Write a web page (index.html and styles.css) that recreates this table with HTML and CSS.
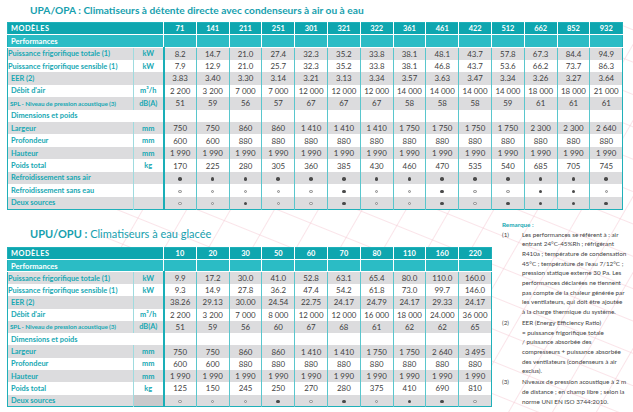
FILE: index.html
```html
<!DOCTYPE html>
<html lang="fr">
<head>
<meta charset="utf-8">
<link rel="stylesheet" href="styles.css">
</head>
<body>
<div class="page">
  <svg class="deco" viewBox="0 0 633 412" aria-hidden="true">
    <defs>
      <pattern id="pa" width="38" height="38" patternUnits="userSpaceOnUse" patternTransform="rotate(30)">
        <path d="M0 0V38" stroke="#f5c3cf" stroke-width="0.9" fill="none"/>
      </pattern>
      <pattern id="pb" width="30" height="30" patternUnits="userSpaceOnUse" patternTransform="rotate(22)">
        <path d="M0 0H30" stroke="#f5c3cf" stroke-width="0.9" fill="none"/>
      </pattern>
      <clipPath id="cz">
        <path d="M100 200H633V412H489V262H100Z M621 24H633V200H621Z"/>
      </clipPath>
    </defs>
    <g clip-path="url(#cz)">
      <rect width="633" height="412" fill="url(#pa)"/>
      <rect width="633" height="412" fill="url(#pb)"/>
    </g>
  </svg>

  <section class="block1">
    <h1 class="title t1"><span class="pre">UPA/OPA :</span> Climatiseurs à détente directe avec condenseurs à air ou à eau</h1>
    <table class="spec wide">
      <colgroup><col class="c-lb"><col class="c-u"><col span="14" class="c-m"></colgroup>
      <tr class="hd"><th colspan="2" class="hl">MODÈLES</th><th>71</th><th>141</th><th>211</th><th>251</th><th>301</th><th>321</th><th>322</th><th>361</th><th>461</th><th>422</th><th>512</th><th>662</th><th>852</th><th>932</th></tr>
      <tr class="sec"><th colspan="2" class="hl">Performances</th><td></td><td></td><td></td><td></td><td></td><td></td><td></td><td></td><td></td><td></td><td></td><td></td><td></td><td></td></tr>
      <tr class="g"><th class="lb fl">Puissance frigorifique totale (1)</th><td class="u">kW</td><td>8.2</td><td>14.7</td><td>21.0</td><td>27.4</td><td>32.3</td><td>35.2</td><td>33.8</td><td>38.1</td><td>48.1</td><td>43.7</td><td>57.8</td><td>67.3</td><td>84.4</td><td>94.9</td></tr>
      <tr><th class="lb fl">Puissance frigorifique sensible (1)</th><td class="u">kW</td><td>7.9</td><td>12.9</td><td>21.0</td><td>25.7</td><td>32.3</td><td>35.2</td><td>33.8</td><td>38.1</td><td>46.8</td><td>43.7</td><td>53.6</td><td>66.2</td><td>73.7</td><td>86.3</td></tr>
      <tr class="g"><th class="lb">EER (2)</th><td class="u"></td><td>3.83</td><td>3.40</td><td>3.30</td><td>3.14</td><td>3.21</td><td>3.13</td><td>3.34</td><td>3.57</td><td>3.63</td><td>3.47</td><td>3.34</td><td>3.26</td><td>3.27</td><td>3.64</td></tr>
      <tr><th class="lb">Débit d'air</th><td class="u">m³/h</td><td>2&nbsp;200</td><td>3&nbsp;200</td><td>7&nbsp;000</td><td>7&nbsp;000</td><td>12&nbsp;000</td><td>12&nbsp;000</td><td>12&nbsp;000</td><td>14&nbsp;000</td><td>14&nbsp;000</td><td>14&nbsp;000</td><td>14&nbsp;000</td><td>18&nbsp;000</td><td>18&nbsp;000</td><td>21&nbsp;000</td></tr>
      <tr class="g"><th class="lb spl">SPL - Niveau de pression acoustique (3)</th><td class="u">dB(A)</td><td>51</td><td>59</td><td>56</td><td>57</td><td>67</td><td>67</td><td>67</td><td>58</td><td>58</td><td>58</td><td>59</td><td>61</td><td>61</td><td>61</td></tr>
      <tr class="dim"><th colspan="2" class="lb">Dimensions et poids</th><td></td><td></td><td></td><td></td><td></td><td></td><td></td><td></td><td></td><td></td><td></td><td></td><td></td><td></td></tr>
      <tr class="g"><th class="lb">Largeur</th><td class="u">mm</td><td>750</td><td>750</td><td>860</td><td>860</td><td>1&nbsp;410</td><td>1&nbsp;410</td><td>1&nbsp;410</td><td>1&nbsp;750</td><td>1&nbsp;750</td><td>1&nbsp;750</td><td>1&nbsp;750</td><td>2&nbsp;300</td><td>2&nbsp;300</td><td>2&nbsp;640</td></tr>
      <tr><th class="lb">Profondeur</th><td class="u">mm</td><td>600</td><td>600</td><td>880</td><td>880</td><td>880</td><td>880</td><td>880</td><td>880</td><td>880</td><td>880</td><td>880</td><td>880</td><td>880</td><td>880</td></tr>
      <tr class="g"><th class="lb">Hauteur</th><td class="u">mm</td><td>1&nbsp;990</td><td>1&nbsp;990</td><td>1&nbsp;990</td><td>1&nbsp;990</td><td>1&nbsp;990</td><td>1&nbsp;990</td><td>1&nbsp;990</td><td>1&nbsp;990</td><td>1&nbsp;990</td><td>1&nbsp;990</td><td>1&nbsp;990</td><td>1&nbsp;990</td><td>1&nbsp;990</td><td>1&nbsp;990</td></tr>
      <tr><th class="lb">Poids total</th><td class="u">kg</td><td>170</td><td>225</td><td>280</td><td>305</td><td>360</td><td>385</td><td>430</td><td>460</td><td>470</td><td>535</td><td>540</td><td>685</td><td>705</td><td>745</td></tr>
      <tr class="g"><th class="lb">Refroidissement sans air</th><td class="u"></td><td><i class="on"></i></td><td><i class="on"></i></td><td><i class="on"></i></td><td><i class="on"></i></td><td><i class="on"></i></td><td><i class="on"></i></td><td><i class="on"></i></td><td><i class="on"></i></td><td><i class="on"></i></td><td><i class="on"></i></td><td><i class="on"></i></td><td><i class="on"></i></td><td><i class="on"></i></td><td><i class="on"></i></td></tr>
      <tr><th class="lb">Refroidissement sans eau</th><td class="u"></td><td><i class="off"></i></td><td><i class="off"></i></td><td><i class="off"></i></td><td><i class="off"></i></td><td><i class="off"></i></td><td><i class="on"></i></td><td><i class="off"></i></td><td><i class="off"></i></td><td><i class="on"></i></td><td><i class="off"></i></td><td><i class="off"></i></td><td><i class="on"></i></td><td><i class="on"></i></td><td><i class="off"></i></td></tr>
      <tr class="g"><th class="lb">Deux sources</th><td class="u"></td><td><i class="off"></i></td><td><i class="off"></i></td><td><i class="on"></i></td><td><i class="off"></i></td><td><i class="off"></i></td><td><i class="on"></i></td><td><i class="off"></i></td><td><i class="off"></i></td><td><i class="on"></i></td><td><i class="off"></i></td><td><i class="on"></i></td><td><i class="on"></i></td><td><i class="on"></i></td><td><i class="on"></i></td></tr>
    </table>
  </section>

  <section class="block2">
    <div class="left">
      <h1 class="title t2"><span class="pre">UPU/OPU :</span> Climatiseurs à eau glacée</h1>
      <table class="spec narrow">
        <colgroup><col class="c-lb"><col class="c-u"><col span="10" class="c-m"></colgroup>
        <tr class="hd"><th colspan="2" class="hl">MODÈLES</th><th>10</th><th>20</th><th>30</th><th>50</th><th>60</th><th>70</th><th>80</th><th>110</th><th>160</th><th>220</th></tr>
        <tr class="sec"><th colspan="2" class="hl">Performances</th><td></td><td></td><td></td><td></td><td></td><td></td><td></td><td></td><td></td><td></td></tr>
        <tr class="g"><th class="lb fl">Puissance frigorifique totale (1)</th><td class="u">kW</td><td>9.9</td><td>17.2</td><td>30.0</td><td>41.0</td><td>52.8</td><td>63.1</td><td>65.4</td><td>80.0</td><td>110.0</td><td>160.0</td></tr>
        <tr><th class="lb fl">Puissance frigorifique sensible (1)</th><td class="u">kW</td><td>9.3</td><td>14.9</td><td>27.8</td><td>36.2</td><td>47.4</td><td>54.2</td><td>61.8</td><td>73.0</td><td>99.7</td><td>146.0</td></tr>
        <tr class="g"><th class="lb">EER (2)</th><td class="u"></td><td>38.26</td><td>29.13</td><td>30.00</td><td>24.54</td><td>22.75</td><td>24.17</td><td>24.79</td><td>24.17</td><td>29.33</td><td>24.17</td></tr>
        <tr><th class="lb">Débit d'air</th><td class="u">m³/h</td><td>2&nbsp;200</td><td>3&nbsp;200</td><td>7&nbsp;000</td><td>8&nbsp;000</td><td>12&nbsp;000</td><td>12&nbsp;000</td><td>16&nbsp;000</td><td>18&nbsp;000</td><td>24.000</td><td>36&nbsp;000</td></tr>
        <tr class="g"><th class="lb spl">SPL - Niveau de pression acoustique (3)</th><td class="u">dB(A)</td><td>51</td><td>59</td><td>56</td><td>60</td><td>67</td><td>68</td><td>61</td><td>62</td><td>62</td><td>65</td></tr>
        <tr class="dim"><th colspan="2" class="lb">Dimensions et poids</th><td></td><td></td><td></td><td></td><td></td><td></td><td></td><td></td><td></td><td></td></tr>
        <tr class="g"><th class="lb">Largeur</th><td class="u">mm</td><td>750</td><td>750</td><td>860</td><td>860</td><td>1&nbsp;410</td><td>1&nbsp;410</td><td>1&nbsp;750</td><td>1&nbsp;750</td><td>2&nbsp;640</td><td>3&nbsp;495</td></tr>
        <tr><th class="lb">Profondeur</th><td class="u">mm</td><td>600</td><td>600</td><td>880</td><td>880</td><td>880</td><td>880</td><td>880</td><td>880</td><td>880</td><td>880</td></tr>
        <tr class="g"><th class="lb">Hauteur</th><td class="u">mm</td><td>1&nbsp;990</td><td>1&nbsp;990</td><td>1&nbsp;990</td><td>1&nbsp;990</td><td>1&nbsp;990</td><td>1&nbsp;990</td><td>1&nbsp;990</td><td>1&nbsp;990</td><td>1&nbsp;990</td><td>1&nbsp;990</td></tr>
        <tr><th class="lb">Poids total</th><td class="u">kg</td><td>125</td><td>150</td><td>245</td><td>250</td><td>270</td><td>280</td><td>375</td><td>410</td><td>690</td><td>810</td></tr>
        <tr class="g"><th class="lb">Deux sources</th><td class="u dk"></td><td><i class="off"></i></td><td><i class="off"></i></td><td><i class="off"></i></td><td><i class="on"></i></td><td><i class="off"></i></td><td><i class="on"></i></td><td><i class="off"></i></td><td><i class="on"></i></td><td><i class="on"></i></td><td><i class="off"></i></td></tr>
      </table>
    </div>

    <aside class="notes">
      <p class="rm">Remarque :</p>
      <div class="note"><span class="n">(1)</span><p>Les performances se réfèrent à : air<br>entrant 24°C-45%Rh ; réfrigérant<br>R410a ; température de condensation<br>45°C ; température de l'eau 7/12°C ;<br>pression statique externe 30 Pa. Les<br>performances déclarées ne tiennent<br>pas compte de la chaleur générée par<br>les ventilateurs, qui doit être ajoutée<br>à la charge thermique du système.</p></div>
      <div class="note"><span class="n">(2)</span><p>EER (Energy Efficiency Ratio)<br>= puissance frigorifique totale<br>/ puissance absorbée des<br>compresseurs + puissance absorbée<br>des ventilateurs (condenseurs à air<br>exclus).</p></div>
      <div class="note"><span class="n">(3)</span><p>Niveaux de pression acoustique à 2 m<br>de distance ; en champ libre ; selon la<br>norme UNI EN ISO 3744:2010.</p></div>
    </aside>
  </section>
</div>
</body>
</html>
```

FILE: styles.css
```css
* { box-sizing: border-box; }

body {
  margin: 0;
  background: #fff;
  font-family: Lato, "Open Sans", "Liberation Sans", sans-serif;
}

.page {
  position: relative;
  width: 633px;
  height: 412px;
  overflow: hidden;
}

.deco {
  position: absolute;
  left: 0;
  top: 0;
  width: 633px;
  height: 412px;
  z-index: 0;
}

section {
  position: relative;
  z-index: 1;
}

.block1 {
  padding: 3px 0 0 7px;
}

.title {
  margin: 0 0 0 23px;
  color: #16a0ae;
  white-space: nowrap;
}

.title .pre {
  font-weight: 700;
}

.t1 {
  font-size: 10.2px;
  line-height: 14px;
  font-weight: 700;
  margin-bottom: 5px;
}

.t2 {
  font-size: 11px;
  line-height: 15px;
  font-weight: 400;
  margin-bottom: 6px;
}

/* ---------- tables ---------- */
.spec {
  border-collapse: collapse;
  table-layout: fixed;
  border: 1.5px solid #1fb0b9;
}

.wide { width: 615px; }
.narrow { width: 484px; }

.c-lb { width: 126px; }
.c-u { width: 30px; }
.c-m { width: 32.8px; }

.wide tr { height: 12.45px; }
.narrow tr { height: 12.3px; }

.spec th,
.spec td {
  padding: 0;
  white-space: nowrap;
  overflow: hidden;
}

.spec td {
  text-align: center;
  font-size: 7.9px;
  color: #3f3f3f;
  border-left: 1.5px solid #5ac6cd;
  background: #fff;
}

.spec .u {
  color: #17a8b3;
  font-weight: 700;
  font-size: 7.4px;
  border-left: 1px solid #9fdbdf;
}

.spec .u + td,
.spec th[colspan] + td {
  border-left: 2px solid #1aaeb7;
}

.spec .g td,
.spec .g th {
  background: #dcdcde;
}

.spec .g .dk {
  background: #c9c9cb;
}

/* header rows */
.spec .hd th {
  background: #0ea6af;
  color: #fff;
  font-weight: 700;
  font-size: 7.4px;
  text-align: center;
  border-left: 1px solid #fff;
  border-bottom: 1px solid #fff;
}

.spec .hd th.hl {
  text-align: left;
  padding-left: 3px;
  letter-spacing: 0.5px;
  border-left: none;
}

.spec .sec th,
.spec .sec td {
  background: #2bbcc5;
  border-bottom: 1px solid #fff;
}

.spec .sec td,
.spec .sec th[colspan] + td {
  border-left: 1px solid #fff;
}

.spec .sec th.hl {
  text-align: left;
  color: #fff;
  font-weight: 700;
  font-size: 7.6px;
  padding-left: 3px;
}

/* row labels */
.spec .lb {
  text-align: left;
  color: #17a8b3;
  font-weight: 700;
  font-size: 7.4px;
  padding-left: 3px;
}

.spec .lb.fl {
  padding-left: 0;
}

.spec .lb.spl {
  font-size: 6.3px;
  padding-left: 2px;
  letter-spacing: -0.1px;
}

/* dots */
.on,
.off {
  display: inline-block;
  vertical-align: middle;
  border-radius: 50%;
}

.on {
  width: 3.6px;
  height: 3.6px;
  background: #4a4a4a;
}

.off {
  width: 3.4px;
  height: 3.4px;
  border: 0.9px solid #8a8a8a;
  background: #e8e8e8;
}

/* ---------- second block ---------- */
.block2 {
  display: flex;
  align-items: flex-start;
  margin-top: 6px;
  padding-left: 7px;
}

.block2 .left {
  padding-top: 10px;
}

.notes {
  padding: 4px 0 0 10px;
  color: #444;
  font-size: 6.3px;
  line-height: 9.7px;
}

.notes p {
  margin: 0;
}

.notes .rm {
  color: #17a8b3;
  font-weight: 700;
  line-height: 9px;
}

.note {
  display: flex;
  margin-top: 1px;
}

.note + .note {
  margin-top: 1px;
}

.note .n {
  flex: none;
  width: 20px;
}
```
